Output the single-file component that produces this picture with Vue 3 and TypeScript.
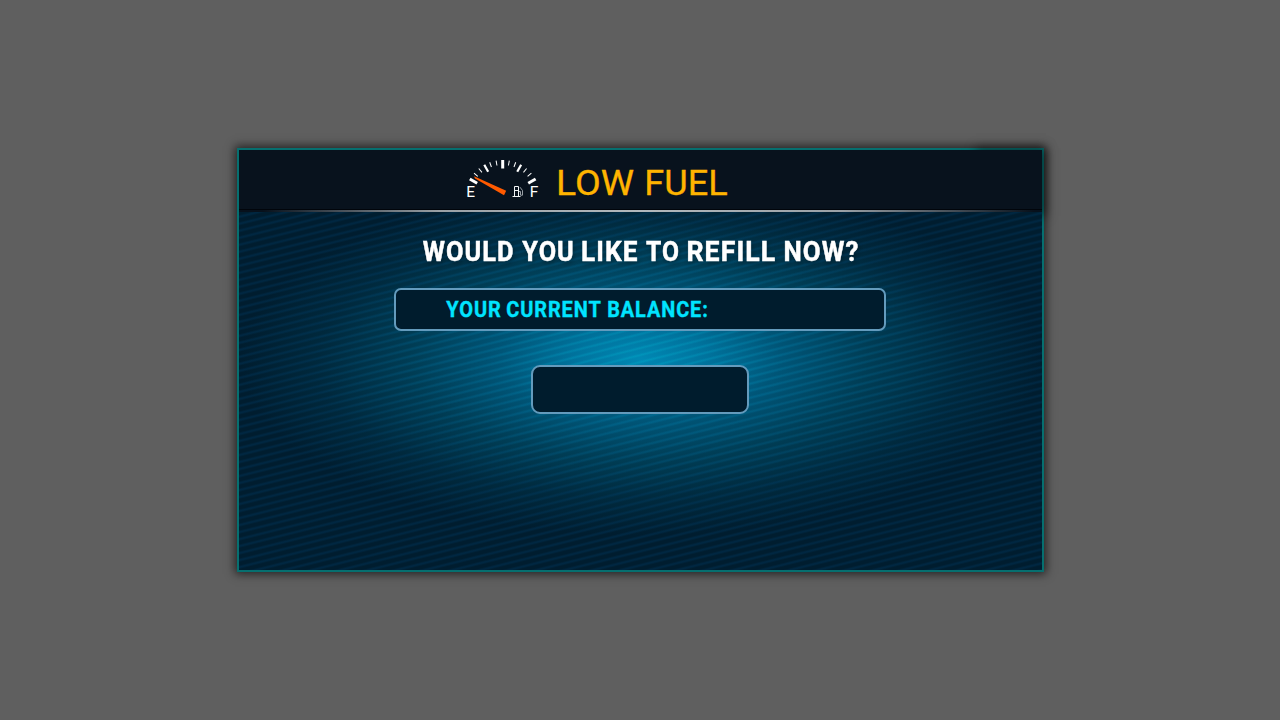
<script setup lang="ts">
interface Tick { angle: number; length: number; width: number }
interface Word { text: string; x: number; width: number }

const ticks: Tick[] = [
  { angle: -60, length: 8.5, width: 3 },
  { angle: -49, length: 5, width: 1 },
  { angle: -39, length: 5, width: 1 },
  { angle: -29, length: 8, width: 2.2 },
  { angle: -20, length: 5, width: 1 },
  { angle: -10, length: 5, width: 1 },
  { angle: 0, length: 8.5, width: 3 },
  { angle: 10, length: 5, width: 1 },
  { angle: 20, length: 5, width: 1 },
  { angle: 29, length: 8, width: 2.2 },
  { angle: 39, length: 5, width: 1 },
  { angle: 49, length: 5, width: 1 },
  { angle: 60, length: 8.5, width: 3 },
]

const title: Word[] = [
  { text: 'LOW', x: 556, width: 78 },
  { text: 'FUEL', x: 644.3, width: 83.4 },
]
const question: Word[] = [
  { text: 'WOULD', x: 422.7, width: 92 },
  { text: 'YOU', x: 522.3, width: 52.5 },
  { text: 'LIKE', x: 581, width: 57.5 },
  { text: 'TO', x: 646, width: 34 },
  { text: 'REFILL', x: 686.4, width: 90 },
  { text: 'NOW?', x: 783.4, width: 76 },
]
const balance: Word[] = [
  { text: 'YOUR', x: 446.2, width: 55.5 },
  { text: 'CURRENT', x: 506.2, width: 95.5 },
  { text: 'BALANCE:', x: 607.2, width: 101.5 },
]
</script>

<template>
  <main class="stage">
    <section class="dialog">
      <header class="header">
        <svg class="gauge" width="76" height="46" viewBox="465 156 76 46">
          <line
            v-for="t in ticks"
            :key="t.angle"
            x1="502.7" y1="160" x2="502.7" :y2="160 + t.length"
            stroke="#fff"
            :stroke-width="t.width"
            :transform="`rotate(${t.angle} 502.7 198)`"
          />
          <path d="M474 176.2 L506.2 190.8 L504 195.2 L475 178.6 Z" fill="#ff5a00" />
          <text x="466.2" y="196.6" textLength="8.8" lengthAdjust="spacingAndGlyphs">E</text>
          <text x="529.8" y="196.6" textLength="8.6" lengthAdjust="spacingAndGlyphs">F</text>
          <path
            d="M514.5 196V186.5H518.5V196M512.5 196.5H520.5M514.5 190.5H518.5"
            fill="none" stroke="#f0f3f5" stroke-width="1"
          />
          <path
            d="M519 191.5H520.5V195.2H522.5V190.5L520 187.2"
            fill="none" stroke="#aab1b6" stroke-width="0.9"
          />
        </svg>
        <svg class="title" width="190" height="46" viewBox="545 160 190 46">
          <text y="195.2"><tspan
            v-for="w in title" :key="w.text" :x="w.x" :textLength="w.width"
            lengthAdjust="spacingAndGlyphs"
          >{{ w.text }}</tspan></text>
        </svg>
      </header>
      <div class="divider"></div>
      <div class="body">
        <svg class="question" width="460" height="46" viewBox="410 229 460 46">
          <text y="261"><tspan
            v-for="w in question" :key="w.text" :x="w.x" :textLength="w.width"
            lengthAdjust="spacingAndGlyphs"
          >{{ w.text }}</tspan></text>
        </svg>
        <div class="balance">
          <svg width="300" height="38" viewBox="430 290 300 38">
            <text y="317.2"><tspan
              v-for="w in balance" :key="w.text" :x="w.x" :textLength="w.width"
              lengthAdjust="spacingAndGlyphs"
            >{{ w.text }}</tspan></text>
          </svg>
        </div>
        <button class="action" type="button" aria-label="Refill"></button>
      </div>
      <div class="corner-shadow"></div>
    </section>
  </main>
</template>

<style>
body { background: #5f5f5f; }
</style>

<style scoped>
.stage {
  width: 1280px;
  height: 720px;
  display: flex;
  background: #5f5f5f;
  overflow: hidden;
  font-family: Roboto, "Liberation Sans", sans-serif;
}
.dialog {
  box-sizing: border-box;
  position: relative;
  isolation: isolate;
  width: 807px;
  height: 424px;
  margin: 148px 0 0 237px;
  border: 2px solid #066f6f;
  box-shadow: 0 0 9px 2px rgba(0, 0, 0, 0.65);
  display: flex;
  flex-direction: column;
  background: #001c2d;
}
.corner-shadow {
  position: absolute;
  z-index: -1;
  top: 2px;
  right: 0;
  width: 62px;
  height: 60px;
  box-shadow: 0 0 10px 4px rgba(0, 0, 0, 0.5);
}
.header {
  height: 60px;
  display: flex;
  background: #08121d;
  box-shadow: inset 0 -1px #01050b;
}
.gauge { margin: 6px 0 0 226px; }
.gauge text { font-size: 14px; fill: #fff; }
.title { margin: 10px 0 0 4px; }
.title text { font-size: 35px; fill: #ffb400; stroke: #ffb400; stroke-width: 0.3px; }
.divider {
  height: 2px;
  background: linear-gradient(90deg, #07111c 3%, #9aa1a6 25%, #b2b8bc 50%, #9aa1a6 75%, #07111c 99%);
}
.body {
  position: relative;
  isolation: isolate;
  flex: 1;
  display: flex;
  flex-direction: column;
  align-items: center;
  padding-right: 1px;
  background:
    repeating-linear-gradient(166deg, rgba(0, 70, 120, 0) 0 2.6px, rgba(0, 80, 140, 0.2) 4.4px 5px, rgba(0, 70, 120, 0) 6.8px),
    radial-gradient(ellipse 400px 176px at 50% 147px, #0088b4 0%, #00729c 17%, #005577 35%, #003d55 57%, #00293d 80%, #001d2f 100%);
}
.body::before {
  content: "";
  position: absolute;
  z-index: -1;
  inset: 0;
  background: repeating-linear-gradient(166deg, rgba(0, 180, 210, 0) 0 2.6px, rgba(0, 190, 215, 0.38) 4.4px 5px, rgba(0, 180, 210, 0) 6.8px);
  mask-image: radial-gradient(ellipse 340px 140px at 50% 147px, #000 0%, rgba(0, 0, 0, 0.35) 45%, transparent 100%);
}
.question { margin-top: 17px; }
.question text {
  font-size: 28.5px;
  font-weight: 700;
  letter-spacing: 1.2px;
  fill: #fff;
  stroke: #fff;
  stroke-width: 0.5px;
  filter: drop-shadow(1px 2px 2px rgba(0, 0, 0, 0.3));
}
.balance {
  box-sizing: border-box;
  width: 492px;
  height: 43px;
  margin-top: 13px;
  padding: 0 0 0 34px;
  border: 2px solid #639bbd;
  border-radius: 7px;
  background: #001c2d;
}
.balance svg { display: block; }
.balance text {
  font-size: 21.5px;
  font-weight: 700;
  letter-spacing: 1px;
  fill: #00e4ff;
  stroke: #00e4ff;
  stroke-width: 0.35px;
}
.action {
  box-sizing: border-box;
  width: 218px;
  height: 49px;
  margin-top: 34px;
  padding: 0;
  border: 2px solid #639bbd;
  border-radius: 9px;
  background: #001c2d;
}
</style>
